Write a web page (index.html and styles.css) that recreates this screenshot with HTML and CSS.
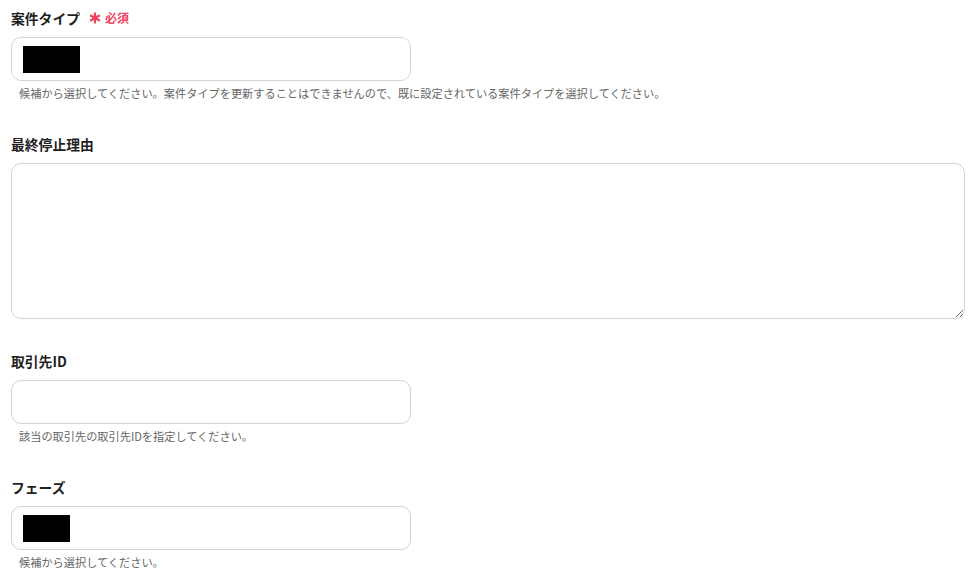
FILE: index.html
```html
<!DOCTYPE html>
<html lang="ja">
<head>
<meta charset="utf-8">
<link rel="stylesheet" href="styles.css">
</head>
<body>
<form class="form">
  <div class="field">
    <div class="label">案件タイプ <span class="req"><svg class="star" viewBox="0 0 12 12" width="12" height="12" aria-hidden="true"><g stroke="#f0435f" stroke-width="2.2" stroke-linecap="butt"><line x1="6" y1="0.5" x2="6" y2="11.5"/><line x1="1.2" y1="3.2" x2="10.8" y2="8.8"/><line x1="1.2" y1="8.8" x2="10.8" y2="3.2"/></g></svg>必須</span></div>
    <div class="input"><span class="mask mask-a"></span></div>
    <div class="help">候補から選択してください。案件タイプを更新することはできませんので、既に設定されている案件タイプを選択してください。</div>
  </div>
  <div class="field field-ta">
    <div class="label">最終停止理由</div>
    <textarea class="textarea"></textarea>
  </div>
  <div class="field">
    <div class="label">取引先ID</div>
    <div class="input"></div>
    <div class="help">該当の取引先の取引先IDを指定してください。</div>
  </div>
  <div class="field">
    <div class="label">フェーズ</div>
    <div class="input"><span class="mask mask-b"></span></div>
    <div class="help">候補から選択してください。</div>
  </div>
</form>
</body>
</html>
```
FILE: styles.css
```css
html, body {
  margin: 0;
  padding: 0;
  background: #ffffff;
}
body {
  font-family: "Noto Sans CJK JP", "Noto Sans", sans-serif;
  color: #222;
}
.form {
  padding: 8px 11px 0 11px;
  display: flex;
  flex-direction: column;
}
.field {
  display: flex;
  flex-direction: column;
  margin-bottom: 33px;
}
.field-ta {
  margin-bottom: 32px;
}
.label {
  font-size: 13.8px;
  font-weight: 700;
  line-height: 20px;
  height: 20px;
  margin-bottom: 9px;
  display: flex;
  align-items: center;
  color: #1f1f1f;
}
.req {
  color: #f0435f;
  font-size: 12px;
  font-weight: 700;
  margin-left: 9px;
  display: inline-flex;
  align-items: center;
}
.star {
  display: block;
  margin-right: 4px;
}
.input {
  box-sizing: border-box;
  width: 400px;
  height: 44px;
  border: 1px solid #d1d5db;
  border-radius: 10px;
  background: #fff;
  display: flex;
  align-items: center;
  padding-left: 11px;
}
.mask {
  display: block;
  background: #000;
  height: 27px;
}
.mask-a { width: 57px; }
.mask-b { width: 47px; }
.textarea {
  box-sizing: border-box;
  width: 954px;
  height: 156px;
  border: 1px solid #d1d5db;
  border-radius: 10px;
  background: #fff;
  resize: vertical;
  margin: 0;
  display: block;
  font-family: inherit;
}
.help {
  font-size: 11.2px;
  line-height: 15px;
  color: #666;
  margin-top: 5px;
  padding-left: 8px;
}
```
